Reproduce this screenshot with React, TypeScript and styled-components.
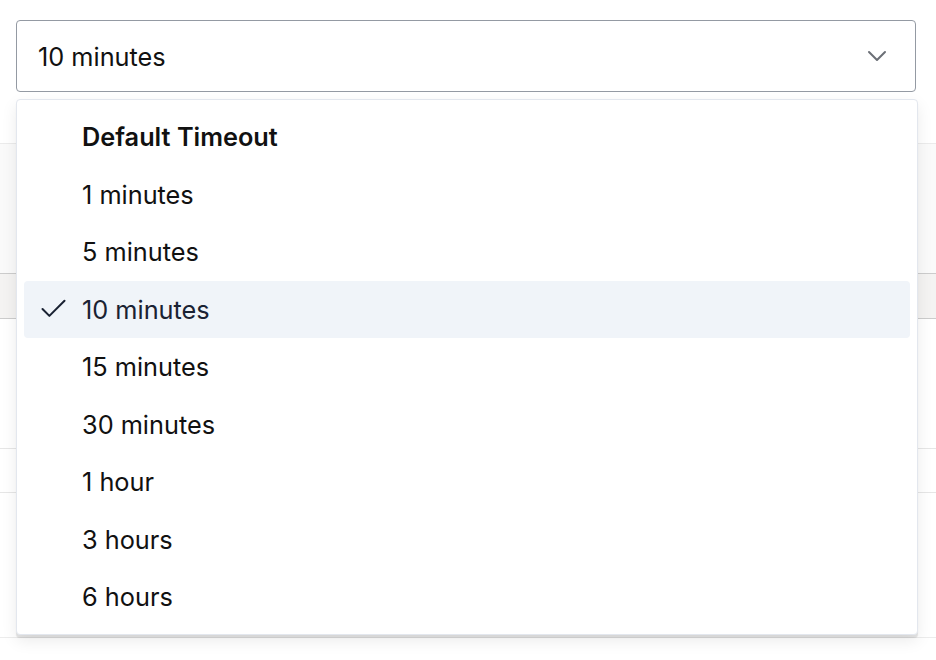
import React from "react";
import styled, { createGlobalStyle } from "styled-components";

const GlobalStyle = createGlobalStyle`
  html, body {
    margin: 0;
    padding: 0;
    background: #ffffff;
    font-family: Inter, "Noto Sans", sans-serif;
  }
`;

const Page = styled.div`
  position: relative;
  width: 936px;
  height: 660px;
  overflow: hidden;
  background: #ffffff;
`;

// the select trigger at the top
const Trigger = styled.div`
  margin: 20px 20px 0 16px;
  height: 72px;
  box-sizing: border-box;
  border: 1px solid #949aa3;
  border-radius: 4px;
  display: flex;
  align-items: center;
  justify-content: space-between;
  padding: 0 22px 0 21px;
  font-size: 25.3px;
  color: #111111;
`;

// faded content lying behind the menu
const Backdrop = styled.div`
  margin-top: 51px;
  display: flex;
  flex-direction: column;
`;

const Band = styled.div<{ $h: number; $bg: string; $top: string; $bottom?: string }>`
  height: ${(p) => p.$h}px;
  background: ${(p) => p.$bg};
  border-top: 1px solid ${(p) => p.$top};
  ${(p) => (p.$bottom ? `border-bottom: 1px solid ${p.$bottom};` : "")}
`;

const Menu = styled.div`
  position: absolute;
  top: 99px;
  left: 16px;
  width: 902px;
  box-sizing: border-box;
  padding: 8px 7px;
  background: #ffffff;
  border: 1px solid #e3e7ee;
  border-radius: 4px;
  box-shadow: 0 3px 1px rgba(0, 0, 0, 0.1), 0 6px 16px rgba(0, 0, 0, 0.08);
`;

const Row = styled.div<{ $selected?: boolean; $heading?: boolean }>`
  position: relative;
  height: 57.5px;
  display: flex;
  align-items: center;
  padding-left: 58px;
  border-radius: 4px;
  font-size: 25.3px;
  font-weight: ${(p) => (p.$heading ? 600 : 400)};
  color: ${(p) => (p.$selected ? "#1a2233" : "#111111")};
  background: ${(p) => (p.$selected ? "#f0f4f9" : "transparent")};
`;

const Check = styled.svg`
  position: absolute;
  left: 13px;
  top: 50%;
  transform: translateY(-50%);
`;

const options = [
  "1 minutes",
  "5 minutes",
  "10 minutes",
  "15 minutes",
  "30 minutes",
  "1 hour",
  "3 hours",
  "6 hours",
];

const selected = "10 minutes";

export default function App() {
  return (
    <Page>
      <GlobalStyle />
      <Trigger>
        <span>{selected}</span>
        <svg width="32" height="32" viewBox="0 0 24 24" fill="none" stroke="#6b6f76" strokeWidth="1.5" strokeLinecap="round" strokeLinejoin="round">
          <path d="m6 9 6 6 6-6" />
        </svg>
      </Trigger>
      <Backdrop>
        <Band $h={129} $bg="#fafafa" $top="#ebebeb" />
        <Band $h={44} $bg="#f4f3f2" $top="#cccccc" $bottom="#cccccc" />
        <Band $h={128} $bg="#ffffff" $top="transparent" />
        <Band $h={43} $bg="#ffffff" $top="#e6e6e6" />
        <Band $h={144} $bg="#ffffff" $top="#e6e6e6" $bottom="#ececec" />
      </Backdrop>
      <Menu>
        <Row $heading>Default Timeout</Row>
        {options.map((o) => (
          <Row key={o} $selected={o === selected}>
            {o === selected && (
              <Check width="33" height="33" viewBox="0 0 24 24" fill="none" stroke="#1a2233" strokeWidth="1.5" strokeLinecap="round" strokeLinejoin="round">
                <path d="M20 6 9 17l-5-5" />
              </Check>
            )}
            {o}
          </Row>
        ))}
      </Menu>
    </Page>
  );
}
